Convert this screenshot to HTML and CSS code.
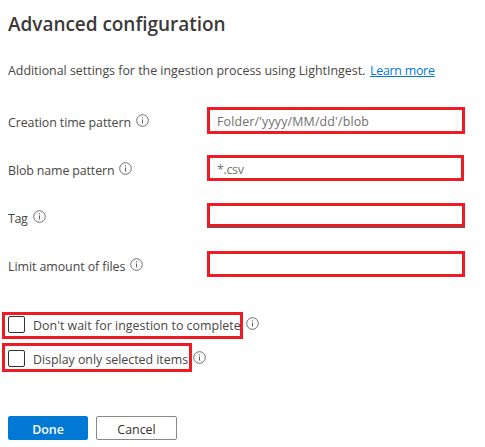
FILE: index.html
```html
<!DOCTYPE html>
<html lang="en">
<head>
<meta charset="utf-8">
<title>Advanced configuration</title>
<link rel="stylesheet" href="styles.css">
</head>
<body>
<svg class="defs" width="0" height="0" aria-hidden="true">
  <symbol id="info" viewBox="0 0 13 13">
    <circle cx="6.5" cy="6.5" r="5.8" fill="none" stroke="currentColor" stroke-width="0.9"/>
    <path d="M6.5 5.5v4M6.5 3.3v1.1" fill="none" stroke="currentColor" stroke-width="1"/>
  </symbol>
</svg>
<main class="panel">
  <h1 class="title">Advanced configuration</h1>
  <p class="intro"><span class="intro-text">Additional settings for the ingestion process using LightIngest.</span><a class="link" href="#">Learn more</a></p>
  <div class="fields">
    <div class="row">
      <label class="label creation">Creation time pattern</label><svg class="info"><use href="#info"/></svg>
      <div class="field first"><span class="folder">Folder/'yyyy/MM/dd'/blob</span></div>
    </div>
    <div class="row">
      <label class="label blob">Blob name pattern</label><svg class="info"><use href="#info"/></svg>
      <div class="field second"><span class="csv">*.csv</span></div>
    </div>
    <div class="row">
      <label class="label tag">Tag</label><svg class="info"><use href="#info"/></svg>
      <div class="field third"></div>
    </div>
    <div class="row">
      <label class="label limit">Limit amount of files</label><svg class="info"><use href="#info"/></svg>
      <div class="field"></div>
    </div>
  </div>
  <div class="options">
    <div class="option">
      <div class="check wait"><span class="box"></span><span class="check-text wait-text">Don't wait for ingestion to complete</span></div><svg class="info"><use href="#info"/></svg>
    </div>
    <div class="option">
      <div class="check display"><span class="box"></span><span class="check-text display-text">Display only selected items</span></div><svg class="info"><use href="#info"/></svg>
    </div>
  </div>
  <div class="actions">
    <button class="button primary">Done</button>
    <button class="button">Cancel</button>
  </div>
</main>
</body>
</html>
```
FILE: styles.css
```css
* { box-sizing: border-box; }
body {
  margin: 0;
  background: #fff;
  color: #484644;
  font: 12.4px/18px "Open Sans", "Noto Sans", sans-serif;
  white-space: nowrap;
  overflow: hidden;
}
.defs { display: block; }
.panel { width: 485px; height: 447px; }
.title {
  margin: 0;
  padding: 10px 0 0 8px;
  font-size: 19px;
  line-height: 28px;
  font-weight: 600;
  letter-spacing: -0.04px;
  color: #3b3a39;
}
.intro {
  display: flex;
  margin: 0;
  padding: 24px 0 0 8px;
}
.intro-text { width: 362px; }
.link { color: #0078d4; text-decoration: underline; letter-spacing: -0.25px; }
.fields { padding: 27px 0 0 8px; }
.row {
  display: flex;
  height: 48px;
}
.label { padding-top: 7px; }
.creation { letter-spacing: -0.08px; }
.blob { letter-spacing: -0.12px; }
.tag { letter-spacing: -0.3px; }
.limit { letter-spacing: -0.06px; }
.folder { letter-spacing: 0.16px; }
.csv { letter-spacing: -0.3px; }
.wait-text { letter-spacing: 0.03px; }
.display-text { letter-spacing: -0.02px; }
.info {
  flex: none;
  width: 13px;
  height: 13px;
  margin: 7px 0 0 5px;
  color: #605e5c;
}
.field {
  width: 258px;
  height: 26px;
  margin-left: auto;
  margin-right: 20px;
  padding-left: 7px;
  border: 3px solid #ed1c24;
  line-height: 24px;
  color: #72706e;
}
.field.first { height: 27px; }
.field.second { width: 257px; margin-right: 21px; }
.field.third { height: 24px; box-shadow: 0 1px 0 #605e5c; }
.options { padding: 13px 0 0 2px; }
.option { display: flex; }
.option + .option { margin-top: 4px; }
.check {
  display: flex;
  border: 3px solid #ed1c24;
  padding-left: 3px;
}
.wait { width: 241px; height: 27px; }
.display { width: 190px; height: 29px; }
.box {
  flex: none;
  width: 17px;
  height: 17px;
  margin: 1px 8px 0 0;
  border: 1px solid #323130;
  border-radius: 2px;
}
.display .box { margin-top: 4px; }
.check-text { padding-top: 2px; }
.display .check-text { padding-top: 5px; }
.option .info { margin: 5px 0 0 3px; }
.option + .option .info { margin: 8px 0 0 1px; }
.row:last-child .field { margin-top: 0; }
.actions {
  display: flex;
  gap: 8px;
  padding: 44px 0 0 8px;
}
.button {
  width: 81px;
  height: 24px;
  padding: 3px 0 0;
  border: 1px solid #8a8886;
  border-radius: 2px;
  background: #fff;
  color: #323130;
  font: inherit;
}
.primary {
  width: 80px;
  border-color: #0078d4;
  background: #0078d4;
  color: #fff;
  font-weight: 600;
}
```
